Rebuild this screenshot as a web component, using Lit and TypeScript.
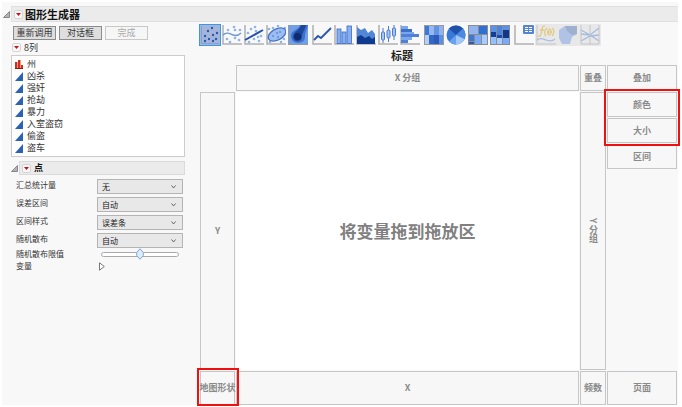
import { LitElement, html, svg, css, SVGTemplateResult } from "lit";
import { customElement, property, state } from "lit/decorators.js";
import { classMap } from "lit/directives/class-map.js";

const axes = svg`<path d="M1 0V19H20" fill="none" stroke="#b0b0b0" stroke-width="1.5"/>`;

const dots = (points: number[][], r: number, fill: string) =>
  points.map(([x, y]) => svg`<circle cx=${x} cy=${y} r=${r} fill=${fill}></circle>`);

const rects = (cells: (number | string)[][]) =>
  cells.map(
    ([x, y, w, h, fill]) => svg`<rect x=${x} y=${y} width=${w} height=${h} fill=${fill}></rect>`
  );

const chartIcons: Record<string, SVGTemplateResult> = {
  points: svg`<rect x="0" y="0" width="20" height="20" fill="#a4b5dc"/>
    <path d="M1.5 1V18.5H19" fill="none" stroke="#8b9dc8"/>
    ${dots([[8, 6], [12, 3], [17, 8], [5, 11], [13, 10], [9, 14], [16, 14], [5, 16], [13, 16]], 1.2, "#2a58b0")}`,
  smoother: svg`${axes}${dots([[6, 5], [12, 2], [13, 5], [18, 5], [5, 14], [8, 17], [13, 13], [17, 15]], 1.3, "#8fb4ea")}
    <path d="M1 10C5 6 8 9 11 10S16 11 19 8" fill="none" stroke="#6f96d2" stroke-width="1.5"/>`,
  fit: svg`${axes}${dots([[4, 8], [7, 4], [11, 2], [12, 6], [5, 17], [10, 14], [14, 12], [17, 11], [15, 16]], 1.3, "#8fb4ea")}
    <path d="M1 15L19 5" stroke="#2850aa" stroke-width="2"/>`,
  ellipse: svg`${axes}${dots([[3, 4], [7, 3], [12, 1], [19, 3], [4, 17], [15, 17], [18, 14]], 1.3, "#8fb4ea")}
    <ellipse cx="11" cy="9.5" rx="9.5" ry="5.5" transform="rotate(-28 11 9.5)" fill="#9dbdf2" stroke="#4674c8" stroke-width="1.4"/>
    ${dots([[7, 11], [11, 8], [14, 7], [12, 12]], 1, "#5c8de0")}`,
  contour: svg`<rect width="20" height="20" fill="#6f9fe8"/>
    <path d="M12 0C11 5 3 5 3 11C3 20 17 20 17 12C17 7 19 5 20 0Z" fill="#3f70ca"/>
    <path d="M13 0C12 5 5 7 5 12C6 18 14 17 14 12C14 7 17 5 18 0Z" fill="#1c469c"/>
    <circle cx="9.5" cy="11.5" r="3.5" fill="#0d2c70"/>
    <path d="M.5 0V19.5H20" fill="none" stroke="#9a9a9a"/>`,
  line: svg`${axes}<path d="M2 15L6 11L9 13L14 8L19 3" fill="none" stroke="#2c55ae" stroke-width="1.8"/>`,
  bar: svg`${axes}<g stroke="#3c6cc4" stroke-width=".8" fill="#86aff2">
    <rect x="3" y="4" width="4" height="14.5"/><rect x="8" y="7" width="4" height="11.5"/><rect x="13" y="1" width="4.5" height="17.5"/></g>`,
  area: svg`${axes}<path d="M1 2L5 5L9 3L12 8L16 5L19 9V19H1Z" fill="#5286d6"/>
    <path d="M1 12L5 10L9 13L13 11L16 14L19 12V19H1Z" fill="#0e3a90"/>`,
  box: svg`${axes}<g stroke="#4a7bd0" fill="#a5c5f7"><path d="M5 3V18M10.5 1V17M16 0V15"/>
    <rect x="3.5" y="7" width="3" height="8" rx="1"/><rect x="9" y="5" width="3" height="8" rx="1"/><rect x="14.5" y="3" width="3" height="8" rx="1"/></g>`,
  histogram: svg`${axes}${rects([[1, 1, 7, 3, "#7aa6ee"], [1, 4, 11, 3, "#3e70c8"], [1, 7, 13, 2, "#7aa6ee"], [1, 9, 18, 3, "#4e80d6"], [1, 12, 11, 3, "#7aa6ee"], [1, 15, 7, 3, "#4e80d6"]])}`,
  heatmap: svg`${rects([[0, 0, 5, 10, "#3b78d8"], [5, 0, 5, 10, "#96b8f0"], [10, 0, 5, 10, "#6493e2"], [15, 0, 5, 10, "#8db4f2"], [0, 10, 5, 10, "#b2d0fc"], [5, 10, 5, 10, "#3468c4"], [10, 10, 5, 10, "#2c5cb8"], [15, 10, 5, 10, "#5a90e6"]])}
    <rect x=".5" y=".5" width="19" height="19" fill="none" stroke="#9a9a9a"/>`,
  pie: svg`<circle cx="10" cy="10" r="9.5" fill="#3878d8"/>
    <path d="M10 10L3 3.5A9.5 9.5 0 0 1 17 3.5Z" fill="#1f50aa"/>
    <path d="M10 10L17 3.5A9.5 9.5 0 0 1 18.5 14Z" fill="#4a8ae0"/>
    <path d="M10 10L18.5 14A9.5 9.5 0 0 1 10 19.5Z" fill="#a2c8fa"/>
    <path d="M10 10V19.5A9.5 9.5 0 0 1 3 16.5Z" fill="#6ca0ee"/>`,
  treemap: svg`<rect width="20" height="20" fill="#8c8c8c"/>
    ${rects([[1, 1, 9, 8, "#94b4ee"], [11, 1, 8, 8, "#2f70d4"], [1, 10, 5, 6, "#3f78d4"], [1, 17, 5, 2, "#2f5cae"], [7, 10, 6, 9, "#78a8fa"], [14, 10, 5, 9, "#a8ccff"]])}`,
  mosaic: svg`<rect width="20" height="20" fill="#8c8c8c"/>
    ${rects([[1, 1, 5, 6, "#5a92ea"], [1, 7, 5, 5, "#143f94"], [1, 12, 5, 7, "#96c0fc"], [7, 1, 5, 9, "#4a84e0"], [7, 10, 5, 3, "#1d4ca6"], [7, 13, 5, 6, "#a6ccff"], [13, 1, 6, 4, "#5a92ea"], [13, 5, 6, 8, "#0f3688"], [13, 13, 6, 6, "#7aaafa"]])}`,
  caption: svg`${axes}<rect x="9" y="0" width="11" height="9" rx="1" fill="#5684d2"/>
    ${rects([[11, 2, 3, 1, "#fff"], [11, 4, 3, 1, "#fff"], [11, 6, 3, 1, "#fff"], [15, 2, 3, 1, "#fff"], [15, 4, 3, 1, "#fff"], [15, 6, 3, 1, "#fff"]])}`,
  formula: svg`<path d="M1 0V19H20" fill="none" stroke="#cfcfcf" stroke-width="1.5"/>
    <path d="M9 1C6 0 6 4 5.5 7S4 12 2 11M4 5H8M11 3C8 5 8 9 10 11M16 3C19 5 18 9 16 11M13.5 4C11 5 11 9 13 10C16 9 16 5 13.5 4M12 7H15" fill="none" stroke="#e2c982" stroke-width="1.3"/>
    <path d="M1 15C5 12 7 14 10 15S16 17 19 14" fill="none" stroke="#a9bfe2" stroke-width="1.3"/>`,
  map: svg`<path d="M1 5L7 1H19V9L14 12L12 19H4L1 13Z" fill="#b1c3e4"/>
    <path d="M7 1H19V9L14 10L9 6Z" fill="#9eafcf"/>`,
  parallel: svg`<path d="M1 5L10 10L19 3M1 9L10 10L19 16M1 16L10 11L19 10" fill="none" stroke="#a5bbe0" stroke-width="1.3"/>
    <path d="M1 0V19H19V0M10 0V19" fill="none" stroke="#c4c4c4"/>`,
};

const chartGroups = [
  [["points", "点"], ["smoother", "平滑线"], ["fit", "拟合线"], ["ellipse", "椭圆"], ["contour", "等高线"]],
  [["line", "线"], ["bar", "条形图"], ["area", "面积图"], ["box", "箱线图"], ["histogram", "直方图"]],
  [["heatmap", "热图"], ["pie", "饼图"], ["treemap", "树形图"], ["mosaic", "马赛克图"]],
  [["caption", "标题框"], ["formula", "公式"], ["map", "地图形状"], ["parallel", "平行图"]],
];
const unavailable = new Set(["formula", "map", "parallel"]);

@customElement("red-menu")
export class RedMenu extends LitElement {
  @property() label = "";

  static styles = css`
    :host { display: block; flex: none; }
    button {
      display: grid; place-items: center; width: 9px; height: 9px; padding: 0;
      border: 1px solid #d4d4d4; border-radius: 2px; background: #f8f8f8;
    }
    svg { display: block; }
  `;

  render() {
    return html`<button aria-label=${this.label}>
      <svg width="5" height="3" viewBox="0 0 5 3"><path d="M0 0H5L2.5 3Z" fill="#d01018"/></svg>
    </button>`;
  }
}

@customElement("control-panel")
export class ControlPanel extends LitElement {
  @state() private columns = ["州", "凶杀", "强奸", "抢劫", "暴力", "入室盗窃", "偷盗", "盗车"];
  @state() private fields = [
    { id: "summary", label: "汇总统计量", value: "无" },
    { id: "error", label: "误差区间", value: "自动" },
    { id: "style", label: "区间样式", value: "误差条" },
    { id: "jitter", label: "随机散布", value: "自动" },
  ];

  static styles = css`
    :host { display: block; color: #333; font-size: 9px; line-height: 12px; }
    button, select { font: inherit; color: inherit; }
    svg { display: block; }
    .actions { display: grid; grid-template-columns: repeat(3, 43px); gap: 3px; padding-left: 2px; }
    .action {
      height: 14px; padding: 0; border: 1px solid #8c8c8c; background: #dedede;
      line-height: 12px; white-space: nowrap;
    }
    .action:disabled { border-color: #c8c8c8; background: #f6f6f6; color: #aaa; }
    .count { display: flex; align-items: center; gap: 3px; height: 15px; padding-left: 1px; }
    .columns {
      margin: 0; padding: 2px 3px; border: 1px solid #ccc; background: #fff; list-style: none;
    }
    .column { display: flex; align-items: center; gap: 4px; height: 12px; white-space: nowrap; }
    .section { display: flex; align-items: center; gap: 1px; margin-top: 4px; }
    .section-bar {
      display: flex; flex: 1; align-items: center; gap: 3px; height: 12px; padding-left: 2px;
      border: 1px solid #dadada; background: #ebebeb;
    }
    h2 { margin: 0; font-size: 9px; line-height: 12px; color: #111; }
    .fields, .extra {
      display: grid; grid-template-columns: 81px 1fr; margin: 0 2px 0 5px; font-size: 8px;
    }
    .fields { row-gap: 3px; padding-top: 4px; }
    .picker { display: grid; grid-template-columns: 1fr 12px; align-items: center; }
    .picker select {
      grid-area: 1 / 1 / 2 / 3; appearance: none; height: 15px; padding: 0 4px; border: 1px solid #b4b4b4;
      border-radius: 0; background: #e8e8e8; font-size: 8px; color: #222;
    }
    .picker svg { grid-area: 1 / 2; pointer-events: none; }
    .extra input {
      appearance: none; width: 78px; height: 12px; margin: 0 4px; background: none;
    }
    .extra input::-webkit-slider-runnable-track {
      height: 5px; border: 1px solid #a8a8a8; border-radius: 3px; background: #fff; box-sizing: border-box;
    }
    .extra input::-webkit-slider-thumb {
      appearance: none; width: 8px; height: 12px; margin-top: -5px; border: 0; border-radius: 0;
      background: url("data:image/svg+xml,%3Csvg xmlns='http://www.w3.org/2000/svg' viewBox='0 0 8 12'%3E%3Cpath d='M4 .7L7.3 4.5V7.5L4 11.3L.7 7.5V4.5Z' fill='%23dcecfa' stroke='%2380a8d0'/%3E%3C/svg%3E");
    }
    .disclose { display: grid; place-items: center; width: 8px; height: 12px; margin: 0 1px; padding: 0; border: 0; background: none; }
  `;

  render() {
    return html`
      <div class="actions">
        <button class="action">重新调用</button>
        <button class="action">对话框</button>
        <button class="action" disabled>完成</button>
      </div>
      <div class="count"><red-menu label="列菜单"></red-menu><span>8列</span></div>
      <ul class="columns">
        ${this.columns.map((name, i) => html`<li class="column">
          <svg width="8" height="9" viewBox="0 0 8 9">
            ${i === 0
              ? svg`<path d="M0 2H2.5V9H0ZM3 0H5.5V9H3ZM6 5H8V9H6Z" fill="#d03018"/><path d="M0 8H8V9H0Z" fill="#901c10"/>`
              : svg`<path d="M0 9L8 0V9Z" fill="#2c62b4"/>`}
          </svg>${name}</li>`)}
      </ul>
      <div class="section">
        <svg width="7" height="7" viewBox="0 0 7 7"><path d="M.5 6.5H6.5V.5Z" fill="#b4b4b4" stroke="#888"/></svg>
        <div class="section-bar"><red-menu label="点菜单"></red-menu><h2>点</h2></div>
      </div>
      <div class="fields">
        ${this.fields.map((f) => html`
          <label for=${f.id}>${f.label}</label>
          <div class="picker">
            <select id=${f.id}><option>${f.value}</option></select>
            <svg width="5" height="4" viewBox="0 0 5 4"><path d="M.5 .5L2.5 3L4.5 .5" fill="none" stroke="#666"/></svg>
          </div>`)}
      </div>
      <div class="extra">
        <label for="limit">随机散布限值</label>
        <input id="limit" type="range" min="0" max="100" value="50">
        <label for="vars">变量</label>
        <button id="vars" class="disclose" aria-label="变量">
          <svg width="6" height="9" viewBox="0 0 6 9"><path d="M.5 .8V8.2L5.3 4.5Z" fill="#fff" stroke="#777"/></svg>
        </button>
      </div>
    `;
  }
}

@customElement("chart-toolbar")
export class ChartToolbar extends LitElement {
  @state() private selected = "points";

  static styles = css`
    :host { display: flex; gap: 4px; }
    .group { display: flex; gap: 2px; }
    button { width: 20px; height: 20px; padding: 0; border: 0; background: none; }
    .on { outline: 1px solid #3a98e4; }
    button:disabled { background: #e8e8e8; outline: 1px solid #e8e8e8; }
    svg { display: block; }
  `;

  render() {
    return chartGroups.map((group) => html`<div class="group">
      ${group.map(([id, label]) => html`<button
        class=${classMap({ on: this.selected === id })}
        aria-label=${label}
        ?disabled=${unavailable.has(id)}
        @click=${() => (this.selected = id)}
      ><svg width="20" height="20" viewBox="0 0 20 20">${chartIcons[id]}</svg></button>`)}
    </div>`);
  }
}

@customElement("drop-zones")
export class DropZones extends LitElement {
  static styles = css`
    :host {
      display: grid; flex: 1; gap: 1px;
      grid-template-columns: 35px 1fr 26px 70px;
      grid-template-rows: 26px 1fr 34px;
      font-size: 9px; line-height: 12px; font-weight: 700; color: #8a8a8a;
    }
    .zone {
      display: flex; align-items: center; justify-content: center; box-sizing: border-box;
      border: 1px solid #c6c6c6; background: #f7f7f7; white-space: nowrap;
    }
    .x-group { grid-column: 2; }
    .y { grid-area: 2 / 1; }
    .canvas {
      grid-area: 2 / 2; display: grid; place-items: center; background: #fff;
      font-size: 17px; line-height: 24px; color: #808080;
    }
    .y-group { grid-area: 2 / 3; writing-mode: vertical-rl; }
    .side { grid-area: 1 / 4 / 3 / 5; display: flex; flex-direction: column; gap: 1px; }
    .side .zone { height: 25px; }
    .side .overlay { height: 26px; }
    .pair { display: flex; flex-direction: column; gap: 1px; }
    .marked { position: relative; }
    .marked::after { content: ""; position: absolute; inset: -3px; border: 2px solid #f01010; }
    .shape.marked::after { inset: -4px -5px -2px -4px; }
  `;

  render() {
    return html`
      <div class="zone x-group">X 分组</div>
      <div class="zone">重叠</div>
      <div class="side">
        <div class="zone overlay">叠加</div>
        <div class="pair marked">
          <div class="zone">颜色</div>
          <div class="zone">大小</div>
        </div>
        <div class="zone">区间</div>
      </div>
      <div class="zone y">Y</div>
      <div class="canvas">将变量拖到拖放区</div>
      <div class="zone y-group">Y 分组</div>
      <div class="zone shape marked">地图形状</div>
      <div class="zone">X</div>
      <div class="zone">频数</div>
      <div class="zone">页面</div>
    `;
  }
}

@customElement("app-root")
export class AppRoot extends LitElement {
  static styles = css`
    :host {
      display: flex; box-sizing: border-box; min-height: 100vh; padding: 2px 4px 2px 2px; background: #fff;
      font-family: "Noto Sans CJK SC", "Noto Sans", sans-serif;
    }
    .window { display: flex; flex: 1; flex-direction: column; background: #f8f8f8; }
    header { display: flex; align-items: center; gap: 1px; margin-top: 4px; padding-left: 1px; }
    .title-bar {
      display: flex; flex: 1; align-items: center; gap: 2px; height: 14px; padding-left: 2px;
      border: 1px solid #e0e0e0; border-right: 0; background: #ebebeb;
    }
    h1 { margin: 0; font-size: 11px; line-height: 14px; color: #111; }
    svg { display: block; }
    .body { display: grid; flex: 1; grid-template-columns: 174px 1fr; gap: 15px; padding: 0 1px 0 9px; }
    control-panel { padding-top: 4px; }
    .graph { display: flex; flex-direction: column; padding-top: 3px; }
    h2 { margin: 2px 0 1px; font-size: 11px; line-height: 17px; text-align: center; color: #222; }
    .heading { padding-right: 73px; }
  `;

  render() {
    return html`<div class="window">
      <header>
        <svg width="7" height="7" viewBox="0 0 7 7"><path d="M.5 6.5H6.5V.5Z" fill="#b4b4b4" stroke="#888"/></svg>
        <div class="title-bar"><red-menu label="图形生成器菜单"></red-menu><h1>图形生成器</h1></div>
      </header>
      <div class="body">
        <control-panel></control-panel>
        <main class="graph">
          <chart-toolbar></chart-toolbar>
          <h2 class="heading">标题</h2>
          <drop-zones></drop-zones>
        </main>
      </div>
    </div>`;
  }
}
